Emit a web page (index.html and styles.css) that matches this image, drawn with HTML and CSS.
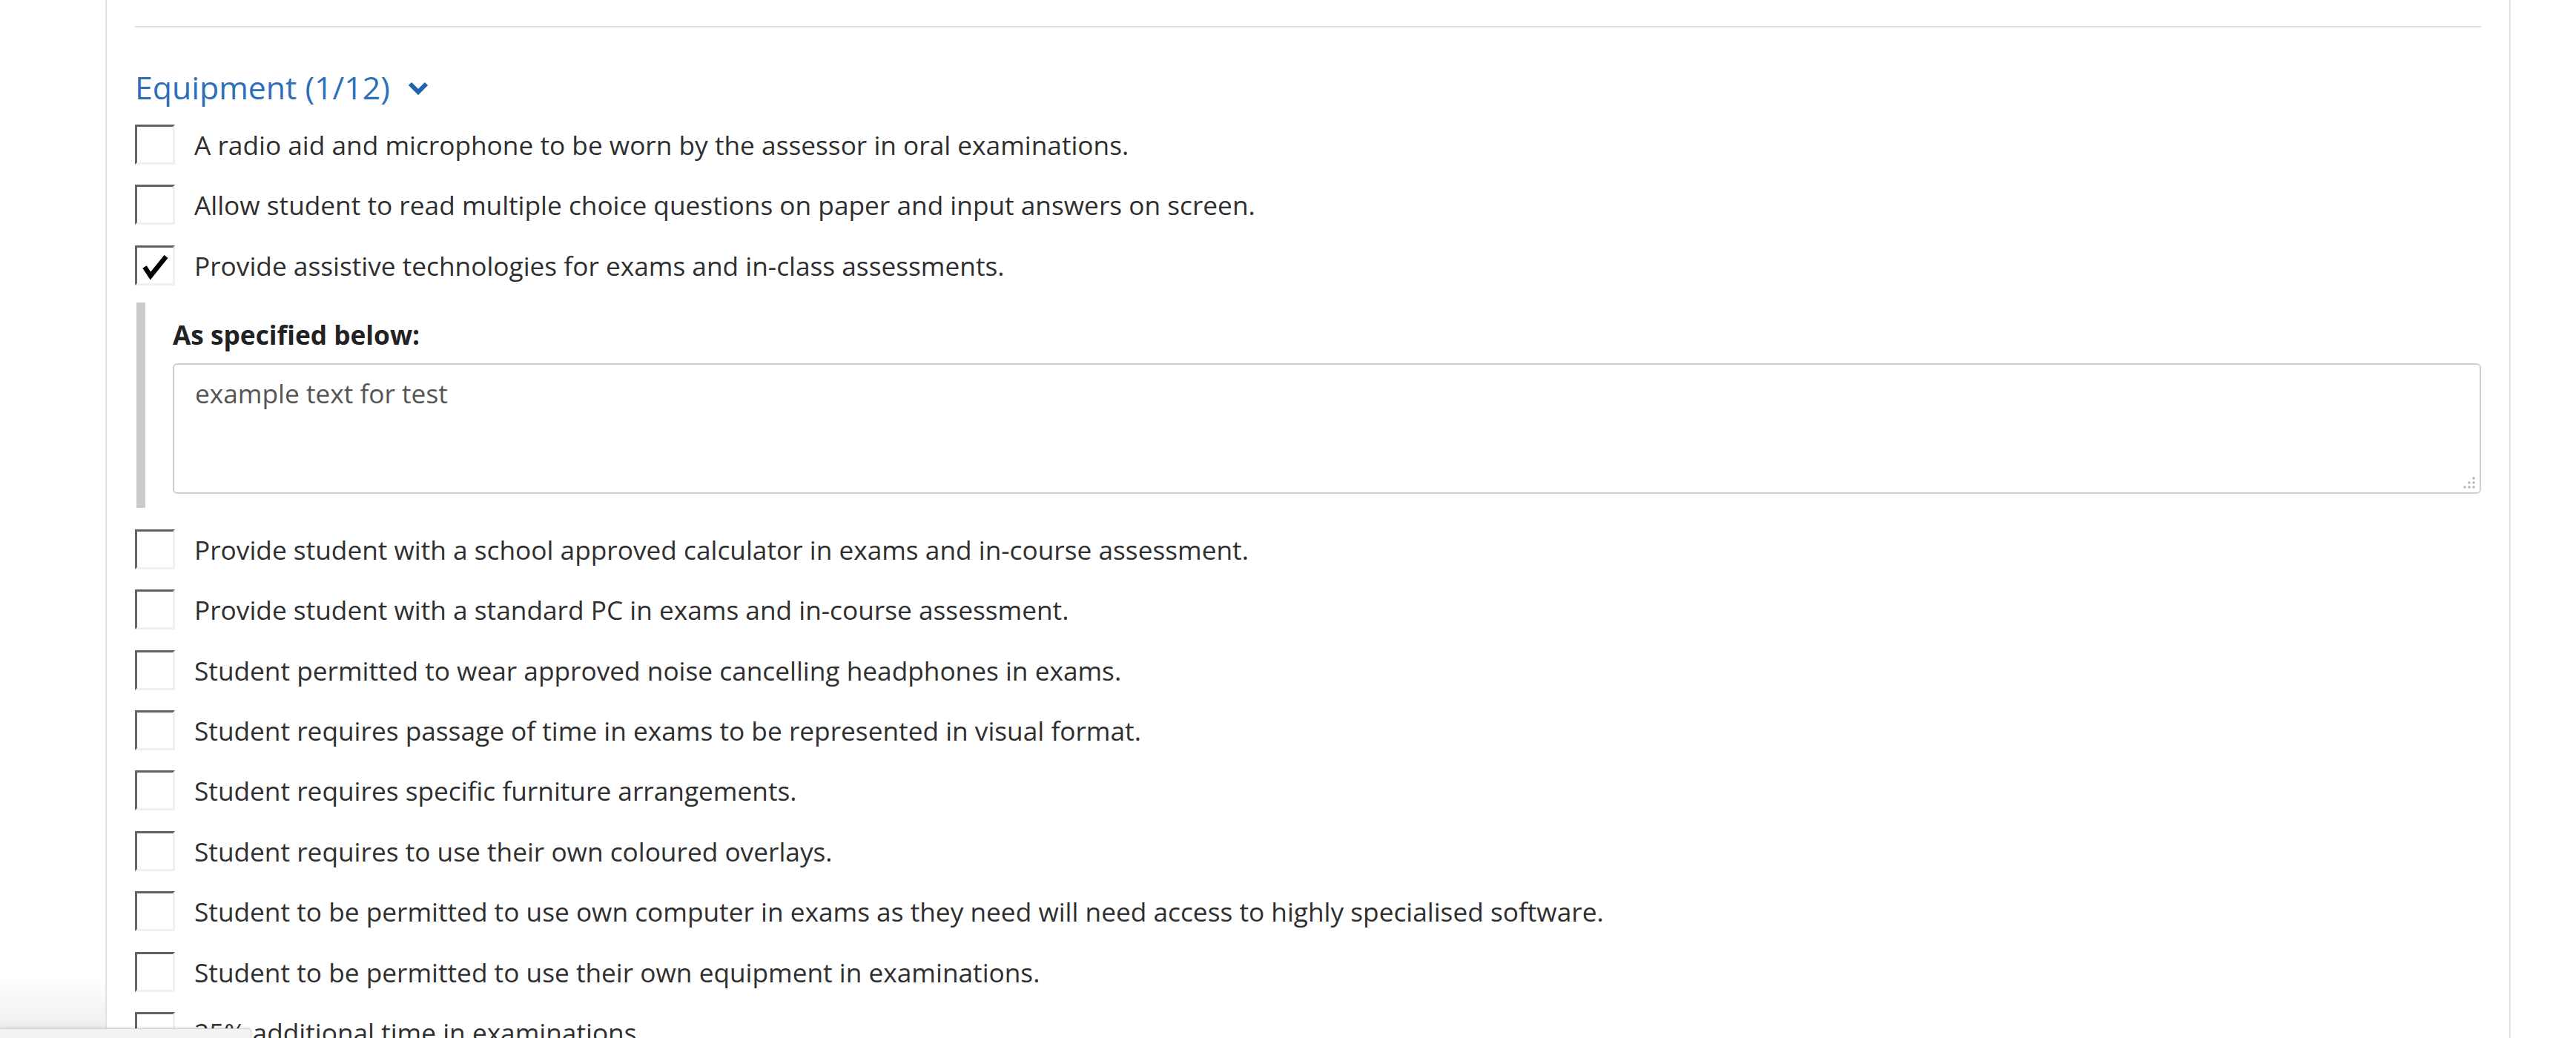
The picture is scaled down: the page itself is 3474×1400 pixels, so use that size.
FILE: index.html
```html
<!DOCTYPE html>
<html lang="en">
<head>
<meta charset="utf-8">
<title>Exam arrangements - Equipment</title>
<link rel="stylesheet" href="styles.css">
</head>
<body>
<div class="panel">
  <hr class="rule">

  <h3 class="group-title">
    Equipment (1/12)
    <svg class="chevron" width="28" height="18" viewBox="0 0 28 18"><path d="M3 3 L14 14 L25 3" fill="none" stroke="currentColor" stroke-width="6"/></svg>
  </h3>

  <div class="opt"><span class="box"></span><span class="opt-text">A radio aid and microphone to be worn by the assessor in oral examinations.</span></div>
  <div class="opt"><span class="box"></span><span class="opt-text">Allow student to read multiple choice questions on paper and input answers on screen.</span></div>
  <div class="opt"><span class="box checked"><svg width="48" height="48" viewBox="0 0 48 48"><path d="M10 26 L18 38 L39 12" fill="none" stroke="#000" stroke-width="6.5" stroke-linejoin="miter"/></svg></span><span class="opt-text">Provide assistive technologies for exams and in-class assessments.</span></div>

  <div class="detail">
    <div class="detail-label">As specified below:</div>
    <div class="area-wrap">
      <textarea class="area">example text for test</textarea>
      <svg class="grip" width="20" height="20" viewBox="0 0 20 20">
        <circle cx="17" cy="4" r="1.7"/>
        <circle cx="11" cy="10" r="1.7"/><circle cx="17" cy="10" r="1.7"/>
        <circle cx="5" cy="16" r="1.7"/><circle cx="11" cy="16" r="1.7"/><circle cx="17" cy="16" r="1.7"/>
      </svg>
    </div>
  </div>

  <div class="opt"><span class="box"></span><span class="opt-text">Provide student with a school approved calculator in exams and in-course assessment.</span></div>
  <div class="opt"><span class="box"></span><span class="opt-text">Provide student with a standard PC in exams and in-course assessment.</span></div>
  <div class="opt"><span class="box"></span><span class="opt-text">Student permitted to wear approved noise cancelling headphones in exams.</span></div>
  <div class="opt"><span class="box"></span><span class="opt-text">Student requires passage of time in exams to be represented in visual format.</span></div>
  <div class="opt"><span class="box"></span><span class="opt-text">Student requires specific furniture arrangements.</span></div>
  <div class="opt"><span class="box"></span><span class="opt-text">Student requires to use their own coloured overlays.</span></div>
  <div class="opt"><span class="box"></span><span class="opt-text">Student to be permitted to use own computer in exams as they need will need access to highly specialised software.</span></div>
  <div class="opt"><span class="box"></span><span class="opt-text">Student to be permitted to use their own equipment in examinations.</span></div>
  <div class="opt"><span class="box"></span><span class="opt-text">25% additional time in examinations</span></div>
</div>

<div class="status-bubble"></div>
</body>
</html>
```
FILE: styles.css
```css
html {
  background: #fff linear-gradient(to bottom, #fff 1320px, #ebebeb 1400px) no-repeat 0 0 / 142px 1400px;
}

body {
  margin: 0;
  font-family: "Open Sans", "Liberation Sans", sans-serif;
  color: #2f2f2f;
}

.panel {
  box-sizing: border-box;
  width: 3244px;
  margin-left: 142px;
  padding: 35px 38px 40px;
  border-left: 2px solid #e2e2e2;
  border-right: 2px solid #e2e2e2;
  background: #fff;
}

.rule {
  margin: 0;
  border: 0;
  border-top: 2px solid #dedede;
}

.group-title {
  display: flex;
  align-items: center;
  gap: 24px;
  margin: 55px 0 0;
  font-size: 42.8px;
  font-weight: normal;
  line-height: 52px;
  color: #2e6fbb;
}

.chevron {
  color: #2162a8;
  margin-top: 2px;
}

.opt {
  display: flex;
  align-items: center;
  gap: 26px;
  margin-top: 27.4px;
  min-height: 54px;
}

.group-title + .opt {
  margin-top: 24px;
}

.box {
  box-sizing: border-box;
  flex: none;
  width: 54px;
  height: 54px;
  border: 3px solid #f0f0f0;
  border-top-color: #626262;
  border-left-color: #666;
  background: #fff;
}

.box svg {
  display: block;
}

.opt-text {
  font-size: 35.25px;
  line-height: 46px;
}

.detail {
  margin: 23px 0 0 2px;
  padding: 20px 0 19px 37px;
  border-left: 12px solid #cbcbcb;
}

.detail + .opt {
  margin-top: 29px;
}

.detail-label {
  font-size: 35.25px;
  font-weight: bold;
  line-height: 46px;
  color: #222;
}

.area-wrap {
  position: relative;
  margin-top: 16px;
}

.area {
  display: block;
  box-sizing: border-box;
  width: 100%;
  height: 176px;
  margin: 0;
  padding: 15px 28px;
  border: 2px solid #cfcfcf;
  border-radius: 6px;
  font-family: inherit;
  font-size: 35.25px;
  line-height: 46px;
  color: #555;
  resize: none;
}

.grip {
  position: absolute;
  right: 7px;
  bottom: 5px;
  fill: #b5b5b5;
}

.status-bubble {
  position: fixed;
  left: 0;
  bottom: 0;
  width: 338px;
  height: 12px;
  background: #f3f3f3;
  border-top: 1px solid #d2d2d2;
  border-right: 1px solid #d2d2d2;
  border-top-right-radius: 5px;
  box-shadow: 0 -1px 4px rgba(0, 0, 0, 0.12);
}
```
